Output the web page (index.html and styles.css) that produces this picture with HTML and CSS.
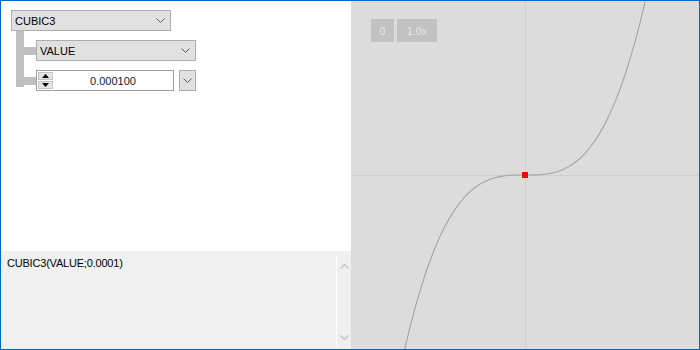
FILE: index.html
```html
<!DOCTYPE html>
<html lang="en">
<head>
    <meta charset="UTF-8">
    <title>Function Editor</title>
    <link rel="stylesheet" href="styles.css">
</head>
<body>
    <div class="window">
        <div class="left-panel">
            <div class="editor">
                <!-- Root function -->
                <div class="combo root">
                    <span>CUBIC3</span>
                    <svg class="chevron" width="9" height="5" viewBox="0 0 9 5"><path d="M0.5 0.5 L4.5 4.5 L8.5 0.5" /></svg>
                </div>
                <div class="children">
                    <div class="child-row">
                        <div class="elbow"></div>
                        <div class="combo">
                            <span>VALUE</span>
                            <svg class="chevron" width="9" height="5" viewBox="0 0 9 5"><path d="M0.5 0.5 L4.5 4.5 L8.5 0.5" /></svg>
                        </div>
                    </div>
                    <div class="child-row last">
                        <div class="elbow"></div>
                        <div class="numeric">
                            <div class="spinner">
                                <div class="spin-btn"><svg width="7" height="4" viewBox="0 0 7 4"><path d="M0 4 L3.5 0 L7 4 Z" /></svg></div>
                                <div class="spin-btn"><svg width="7" height="4" viewBox="0 0 7 4"><path d="M0 0 L3.5 4 L7 0 Z" /></svg></div>
                            </div>
                            <div class="numeric-value">0.000100</div>
                        </div>
                        <div class="drop-btn">
                            <svg class="chevron" width="9" height="5" viewBox="0 0 9 5"><path d="M0.5 0.5 L4.5 4.5 L8.5 0.5" /></svg>
                        </div>
                    </div>
                </div>
            </div>

            <div class="formula">
                <div class="formula-text">CUBIC3(VALUE;0.0001)</div>
                <div class="scrollbar">
                    <svg class="scroll-arrow" width="9" height="5" viewBox="0 0 9 5"><path d="M0.5 4.5 L4.5 0.5 L8.5 4.5" /></svg>
                    <svg class="scroll-arrow" width="9" height="5" viewBox="0 0 9 5"><path d="M0.5 0.5 L4.5 4.5 L8.5 0.5" /></svg>
                </div>
            </div>
        </div>

        <div class="graph">
            <svg class="plot" width="348" height="348" viewBox="351 1 348 348">
                <line class="axis" x1="525.5" y1="1" x2="525.5" y2="349" />
                <line class="axis" x1="351" y1="175.5" x2="699" y2="175.5" />
                <polyline class="curve" points="400,370.3 405,347.8 410,327.1 415,308.1 420,290.8 425,275 430,260.7 435,247.9 440,236.4 445,226.2 450,217.2 455,209.3 460,202.5 465,196.6 470,191.6 475,187.5 480,184.1 485,181.4 490,179.3 495,177.7 500,176.6 505,175.8 510,175.3 515,175.1 520,175 525,175 530,175 535,174.9 540,174.7 545,174.2 550,173.4 555,172.3 560,170.7 565,168.6 570,165.9 575,162.5 580,158.4 585,153.4 590,147.5 595,140.7 600,132.8 605,123.8 610,113.6 615,102.1 620,89.3 625,75 630,59.2 635,41.9 640,22.9 645,2.2 650,-20.3" />
                <rect class="point" x="522" y="172" width="6" height="6" />
            </svg>
            <div class="graph-tools">
                <div class="tool-btn small">0</div>
                <div class="tool-btn wide">1.0x</div>
            </div>
        </div>
    </div>
</body>
</html>
```

FILE: styles.css
```css
* {
    margin: 0;
    padding: 0;
    box-sizing: border-box;
}

body {
    font-family: 'Liberation Sans', Arial, sans-serif;
    font-size: 11px;
    color: #000;
    background: #fff;
}

.window {
    width: 700px;
    height: 350px;
    border: 1px solid #0066cc;
    display: flex;
    overflow: hidden;
}

.left-panel {
    width: 350px;
    display: flex;
    flex-direction: column;
    background: white;
}

.editor {
    height: 250px;
    padding: 9px 0 0 10px;
}

.combo {
    width: 160px;
    height: 21px;
    background: #e1e1e1;
    border: 1px solid #adadad;
    display: flex;
    align-items: center;
    justify-content: space-between;
    padding: 0 5px 0 3px;
}

.chevron {
    fill: none;
    stroke: #5a5a5a;
    stroke-width: 1;
}

.children {
    margin-left: 5px;
    padding-top: 9px;
    border-left: 8px solid #c0c0c0;
    display: flex;
    flex-direction: column;
    gap: 9px;
}

.child-row {
    display: flex;
    align-items: center;
}

.child-row.last {
    margin-bottom: -4px;
}

.elbow {
    width: 12px;
    height: 8px;
    background: #c0c0c0;
}

.numeric {
    width: 138px;
    height: 21px;
    background: white;
    border: 1px solid #a0a0a0;
    display: flex;
    align-items: center;
    padding-left: 1px;
}

.spinner {
    width: 15px;
    height: 17px;
    display: flex;
    flex-direction: column;
    gap: 1px;
}

.spin-btn {
    flex: 1;
    background: #e5e5e5;
    border: 1px solid #c4c4c4;
    display: flex;
    align-items: center;
    justify-content: center;
}

.spin-btn svg {
    fill: #000;
}

.numeric-value {
    flex: 1;
    text-align: center;
    color: #0c1a3c;
}

.drop-btn {
    width: 17px;
    height: 21px;
    margin-left: 5px;
    background: #e1e1e1;
    border: 1px solid #adadad;
    display: flex;
    align-items: center;
    justify-content: center;
}

.formula {
    flex: 1;
    background: #f0f0f0;
    display: flex;
}

.formula-text {
    flex: 1;
    padding: 6px 0 0 6px;
    letter-spacing: -0.2px;
}

.scrollbar {
    width: 15px;
    margin: 6px 0 3px;
    border-left: 1px solid #fff;
    display: flex;
    flex-direction: column;
    justify-content: space-between;
    align-items: center;
    padding: 7px 0 6px 1px;
}

.scroll-arrow {
    fill: none;
    stroke: #c4c4c4;
    stroke-width: 1.5;
}

.graph {
    flex: 1;
    position: relative;
    background: #dcdcdc;
}

.plot {
    display: block;
}

.axis {
    stroke: #cfcfcf;
    stroke-width: 1;
}

.curve {
    fill: none;
    stroke: #a4a4a4;
    stroke-width: 1.1;
}

.point {
    fill: #ff0000;
}

.graph-tools {
    position: absolute;
    left: 20px;
    top: 18px;
    display: flex;
    gap: 3px;
}

.tool-btn {
    height: 23px;
    background: #c2c2c2;
    color: #e8e8e8;
    font-size: 10.5px;
    display: flex;
    align-items: center;
    justify-content: center;
}

.tool-btn.small {
    width: 23px;
}

.tool-btn.wide {
    width: 40px;
}
```
